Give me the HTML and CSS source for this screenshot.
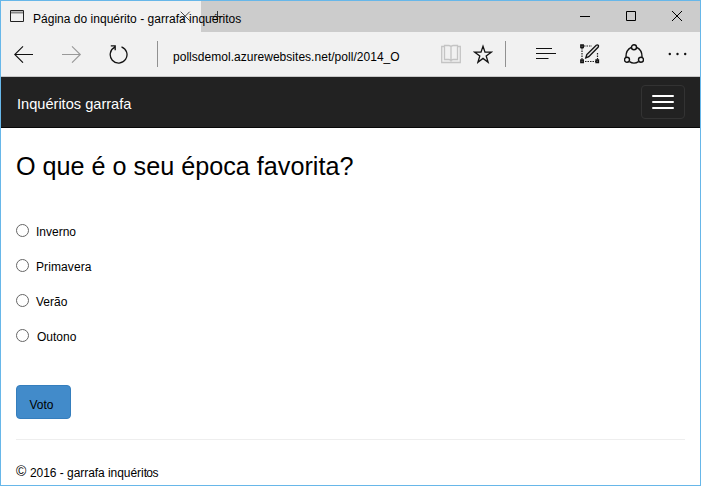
FILE: index.html
```html
<!DOCTYPE html>
<html lang="pt">
<head>
<meta charset="utf-8">
<title>Página do inquérito - garrafa inquéritos</title>
<link rel="stylesheet" href="styles.css">
</head>
<body>
<div class="window">
  <header class="titlebar">
    <div class="tab">
      <svg class="page-icon" width="15" height="13" viewBox="0 0 15 13"><path d="M.5.5h13v11H.5z" fill="none" stroke="#222"/><path d="M1 2.5h12" stroke="#888" stroke-width="2"/></svg>
      <span class="tab-title">Página do inquérito - garrafa inquéritos</span>
      <svg class="tab-close" width="11" height="11" viewBox="0 0 11 11"><path d="M.7.7l9 9m0-9l-9 9" stroke="#444"/></svg>
    </div>
    <svg class="new-tab" width="13" height="13" viewBox="0 0 13 13"><path d="M0 6.5h12M6.500 1v11" stroke="#333"/></svg>
    <div class="controls">
      <svg width="10" height="10" viewBox="0 0 10 10"><path d="M0 5.5h10" stroke="#000"/></svg>
      <svg width="10" height="10" viewBox="0 0 10 10"><path d="M.5.5h9v9h-9z" fill="none" stroke="#000"/></svg>
      <svg width="10" height="10" viewBox="0 0 10 10"><path d="M0 0l10 10M10 0L0 10" stroke="#000"/></svg>
    </div>
  </header>
  <div class="toolbar">
    <svg class="back" width="20" height="18" viewBox="0 0 20 18"><path d="M.7 9.5H19M9 1.300L.7 9.500 9 17.700" fill="none" stroke="#111" stroke-width="1.1"/></svg>
    <svg class="forward" width="20" height="18" viewBox="0 0 20 18"><path d="M0 9.500h18.300M10 1.300l8.300 8.200-8.300 8.200" fill="none" stroke="#999" stroke-width="1.1"/></svg>
    <svg class="reload" width="20" height="20" viewBox="0 0 20 20"><path d="M5.800 3.200A8.400 8.400 0 1 0 12.500 2.800M1.800 1.800h4.400v4.400" fill="none" stroke="#111" stroke-width="1.3"/></svg>
    <span class="divider"></span>
    <span class="url">pollsdemol.azurewebsites.net/poll/2014_O</span>
    <svg class="book" width="20" height="20" viewBox="0 0 20 20"><path d="M10 2.5Q9 1.5 7.500 1.500H3.500V15.500h4Q9 15.500 10 16.500Q11 15.500 12.500 15.500h4V1.500h-4Q11 1.500 10 2.500zV17.500M3 2.500H.7v16h18.600v-16h-2.300" fill="none" stroke="#c4c4c4" stroke-width="1.300"/></svg>
    <svg class="star" width="20" height="20" viewBox="0 0 20 20"><path d="M10 2.200l2 6h6.200l-5 3.700 1.900 6.300L10 14.400l-5.100 3.800 1.900-6.300-5-3.700H8z" fill="none" stroke="#111" stroke-width="1.300"/></svg>
    <span class="divider second"></span>
    <svg class="hub" width="20" height="20" viewBox="0 0 20 20"><path d="M0 4.500h16M0 9.500h20M0 14.500h12.500" stroke="#111" stroke-width="1.200"/></svg>
    <svg class="note" width="20" height="20" viewBox="0 0 20 20"><path d="M4 2h8M2 4v12M17.500 9v7M5 17.500h11" fill="none" stroke="#222" stroke-width="1.200" stroke-dasharray="1.500 1"/><path d="M.8 1h2.500v2.500H.8zM.8 16h2.500v2.500H.8zM16 16h2.500v2.500H16z" fill="#777" stroke="#111" stroke-width="1.300"/><path d="M5.800 13.800l1-3.300 9.400-9.300q1.300-.7 2 .1t-.1 2L8.800 12.600z" fill="#ddd" stroke="#111" stroke-width="1.300"/></svg>
    <svg class="share" width="20" height="20" viewBox="0 0 20 20"><g fill="none" stroke="#111" stroke-width="1.400"><path d="M7.300 3.400Q1.800 6 2 13M12.700 3.400Q18.200 6 18 13M5.500 17.600Q10 20.700 14.500 17.600"/><circle cx="10" cy="3.200" r="2.500"/><circle cx="3" cy="15.800" r="2.500"/><circle cx="17" cy="15.800" r="2.500"/></g></svg>
    <svg class="more" width="20" height="4" viewBox="0 0 20 4"><g fill="#111"><circle cx="1.800" cy="2" r="1.200"/><circle cx="9.500" cy="2" r="1.200"/><circle cx="17.200" cy="2" r="1.200"/></g></svg>
  </div>
  <nav class="navbar">
    <span class="brand">Inquéritos garrafa</span>
    <button class="toggle" aria-label="Menu"><span></span><span></span><span></span></button>
  </nav>
  <main class="content">
    <h1>O que é o seu época favorita?</h1>
    <form>
      <label><input type="radio" name="season"><span class="winter">Inverno</span></label>
      <label><input type="radio" name="season"><span class="spring">Primavera</span></label>
      <label><input type="radio" name="season"><span class="summer">Verão</span></label>
      <label><input type="radio" name="season"><span class="autumn">Outono</span></label>
      <button class="vote" type="button">Voto</button>
    </form>
    <footer><span class="copy">©</span><span class="owner">2016 - garrafa inquéri<span class="tight">tos</span></span></footer>
  </main>
</div>
</body>
</html>
```
FILE: styles.css
```css
* { box-sizing: border-box; }
body { margin: 0; font: 12px/16px "Liberation Sans", Arial, sans-serif; color: #000; background: #fff; overflow: hidden; }
svg { display: block; flex: none; }
.window { width: 701px; height: 486px; border: 1px solid #67b7e9; overflow: hidden; }
.titlebar { display: flex; height: 31px; background: #ccc; }
.tab { display: flex; width: 200px; height: 31px; background: #f1f1f1; padding-left: 9px; }
.page-icon { margin-top: 9px; }
.tab-title { width: 146px; margin: 10px 0 0 8px; white-space: nowrap; letter-spacing: .02px; position: relative; z-index: 1; }
.tab-close { margin: 10px 0 0 1px; }
.new-tab { margin: 9px 0 0 10px; }
.controls { display: flex; gap: 36px; margin: 10px 18px 0 auto; }
.toolbar { display: flex; align-items: center; height: 45px; background: #f1f1f1; border-bottom: 1px solid #c8c8c8; }
.back { margin-left: 13px; }
.forward { margin-left: 28px; }
.reload { margin-left: 27px; }
.divider { width: 1px; height: 26px; margin-left: 28px; background: #919191; }
.url { width: 268px; margin: 5px 0 0 15px; white-space: nowrap; letter-spacing: .03px; }
.book { margin: 0; }
.star { margin-left: 12px; }
.divider.second { margin-left: 12px; }
.hub { margin-left: 30px; }
.note { margin-left: 24px; }
.share { margin-left: 24px; }
.more { margin-left: 24px; }
.navbar { display: flex; justify-content: space-between; height: 51px; padding: 8px 15px 0 16px; background: #222; border-bottom: 1px solid #080808; color: #fff; }
.brand { margin-top: 10px; font-size: 14.6px; line-height: 18px; }
.toggle { display: flex; flex-direction: column; gap: 4px; width: 44px; height: 34px; padding: 9px 10px; border: 1px solid #333; border-radius: 4px; background: transparent; }
.toggle span { width: 22px; height: 2px; border-radius: 1px; background: #fff; }
.content { padding: 0 15px; }
h1 { margin: 20px 0 0; font-size: 25.2px; line-height: 36px; font-weight: 400; white-space: nowrap; }
form { display: flex; flex-direction: column; align-items: flex-start; padding-top: 29px; }
label { display: flex; height: 35px; padding-top: 11px; }
input { appearance: none; width: 13px; height: 13px; margin: 0 7px 0 0; border: 1px solid #666; border-radius: 50%; background: #fff; }
.spring { letter-spacing: .1px; }
.autumn { margin-left: 1px; }
.vote { width: 55px; height: 34px; margin-top: 32px; padding: 6px 4px 0 0; border: 1px solid #357ebd; border-radius: 4px; background: #428bca; color: #000; font: inherit; }
footer { display: flex; margin-top: 20px; padding-top: 24px; border-top: 1px solid #eee; white-space: nowrap; }
.copy { width: 14px; font-size: 14px; line-height: 14px; }
.owner { margin-top: 1px; letter-spacing: -.05px; }
.tight { letter-spacing: -.6px; }
```
